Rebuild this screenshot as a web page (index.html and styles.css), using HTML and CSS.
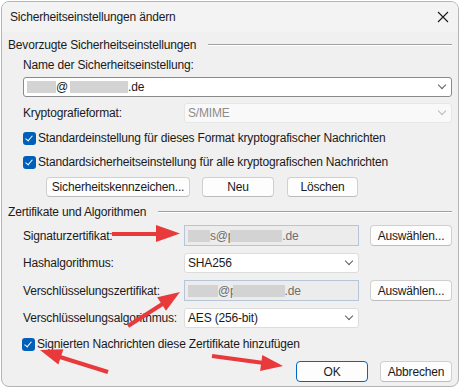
FILE: index.html
```html
<!DOCTYPE html>
<html lang="de">
<head>
    <meta charset="UTF-8">
    <title>Sicherheitseinstellungen ändern</title>
    <link rel="stylesheet" href="styles.css">
</head>
<body>
    <div class="window">
        <div class="titlebar">
            <span class="title">Sicherheitseinstellungen ändern</span>
            <svg class="close" width="12" height="12" viewBox="0 0 12 12"><path d="M1 1 L11 11 M11 1 L1 11" stroke="#1a1a1a" stroke-width="1.1" fill="none"/></svg>
        </div>
        <div class="content">
            <div class="group-head">
                <span>Bevorzugte Sicherheitseinstellungen</span>
                <div class="group-line"></div>
            </div>
            <div class="indent">
                <div class="label-line">Name der Sicherheitseinstellung:</div>
                <div class="select name-select">
                    <span class="value"><span class="blur" style="width: 29px"></span>@<span class="blur gap" style="width: 58px"></span>.de</span>
                    <span class="chevron"></span>
                </div>
                <div class="row krypto-row">
                    <span class="row-label krypto-label">Kryptografieformat:</span>
                    <div class="select disabled wide">
                        <span class="value">S/MIME</span>
                        <span class="chevron"></span>
                    </div>
                </div>
                <div class="check-row first">
                    <span class="checkbox"></span>
                    <span>Standardeinstellung für dieses Format kryptografischer Nachrichten</span>
                </div>
                <div class="check-row second">
                    <span class="checkbox"></span>
                    <span>Standardsicherheitseinstellung für alle kryptografischen Nachrichten</span>
                </div>
                <div class="button-row">
                    <button class="btn btn-kennz">Sicherheitskennzeichen...</button>
                    <button class="btn btn-neu">Neu</button>
                    <button class="btn btn-loeschen">Löschen</button>
                </div>
            </div>

            <div class="group-head second-group">
                <span>Zertifikate und Algorithmen</span>
                <div class="group-line"></div>
            </div>
            <div class="indent">
                <div class="row cert-row sig">
                    <span class="row-label">Signaturzertifikat:</span>
                    <div class="field"><span class="blur" style="width: 22px"></span>s@p<span class="blur over" style="width: 52px"></span>.de</div>
                    <button class="btn btn-choose">Auswählen...</button>
                </div>
                <div class="row algo-row">
                    <span class="row-label">Hashalgorithmus:</span>
                    <div class="select algo">
                        <span class="value">SHA256</span>
                        <span class="chevron"></span>
                    </div>
                </div>
                <div class="row cert-row">
                    <span class="row-label">Verschlüsselungszertifikat:</span>
                    <div class="field"><span class="blur" style="width: 30px"></span>@p<span class="blur over" style="width: 52px"></span>.de</div>
                    <button class="btn btn-choose">Auswählen...</button>
                </div>
                <div class="row algo-row">
                    <span class="row-label">Verschlüsselungsalgorithmus:</span>
                    <div class="select algo">
                        <span class="value">AES (256-bit)</span>
                        <span class="chevron"></span>
                    </div>
                </div>
            </div>
            <div class="check-row last">
                <span class="checkbox"></span>
                <span>Signierten Nachrichten diese Zertifikate hinzufügen</span>
            </div>
            <div class="footer">
                <button class="btn btn-ok">OK</button>
                <button class="btn btn-cancel">Abbrechen</button>
            </div>
        </div>

        <!-- annotation arrows -->
        <svg class="arrows" width="460" height="389" viewBox="0 0 460 389">
            <g fill="#e8393b" stroke="#e8393b">
                <line x1="112" y1="234" x2="160" y2="234" stroke-width="4"/>
                <polygon points="156,225 180,233.5 156,242" stroke="none"/>
                <line x1="128" y1="326" x2="164" y2="303" stroke-width="4"/>
                <polygon points="157.2,297.3 180,292 166,310.7" stroke="none"/>
                <line x1="108" y1="372" x2="60" y2="357" stroke-width="4"/>
                <polygon points="63.4,349.2 40,350 58.4,364.4" stroke="none"/>
                <line x1="212" y1="356" x2="264" y2="363" stroke-width="4"/>
                <polygon points="262.3,355.1 283,366 260.1,370.9" stroke="none"/>
            </g>
        </svg>
    </div>
</body>
</html>
```

FILE: styles.css
```css
body {
    margin: 0;
    background-color: #ffffff;
    font-family: 'Liberation Sans', Arial, sans-serif;
    font-size: 12px;
    letter-spacing: -0.17px;
    color: #1a1a1a;
}

.window {
    position: relative;
    margin: 1px;
    width: 458px;
    height: 386px;
    box-sizing: border-box;
    border: 1px solid #b4b4b4;
    border-radius: 8px;
    background-color: #f0f0f0;
    overflow: hidden;
}

.titlebar {
    height: 30px;
    display: flex;
    align-items: center;
    justify-content: space-between;
    padding: 0 8px 0 8px;
    background-color: #f3f3f3;
}

.close {
    margin-right: 1px;
}

.content {
    padding: 0 6px;
}

.group-head {
    display: flex;
    align-items: center;
    height: 16px;
    margin-top: 5px;
}

.group-head.second-group {
    margin-top: 7px;
}

.group-line {
    flex: 1;
    height: 1px;
    margin-left: 12px;
    background-color: #a0a0a0;
    border-bottom: 1px solid #ffffff;
}

.indent {
    padding-left: 15px;
}

.label-line {
    height: 16px;
    line-height: 16px;
    margin-top: 4px;
}

.select {
    display: flex;
    align-items: center;
    justify-content: space-between;
    height: 20px;
    box-sizing: border-box;
    border: 1px solid #8a8a8a;
    border-radius: 3px;
    background-color: #ffffff;
    padding: 0 6px 0 3px;
}

.name-select {
    margin-top: 4px;
}

.select.disabled {
    border-color: #e6e6e6;
    background-color: #f9f9f9;
    color: #8c8c8c;
}

.select.algo {
    width: 175px;
    border-color: #dcdcdc;
}

.select.wide {
    flex: 1;
}

.chevron {
    width: 5px;
    height: 5px;
    border-right: 1px solid #5c5c5c;
    border-bottom: 1px solid #5c5c5c;
    transform: translateY(-2px) rotate(45deg);
}

.disabled .chevron {
    border-color: #b8b8b8;
}

.value {
    display: flex;
    align-items: center;
}

.blur {
    display: inline-block;
    height: 12px;
    background-color: #d3d3d3;
}

.blur.gap {
    margin-left: 2px;
}

.blur.over {
    margin-left: -4px;
}

.row {
    display: flex;
    align-items: center;
}

.row-label {
    width: 161px;
}

.krypto-row {
    margin-top: 6px;
}

.check-row {
    display: flex;
    align-items: center;
    height: 16px;
}

.check-row.first {
    margin-top: 7px;
}

.check-row.second {
    margin-top: 8px;
}

.check-row.last {
    margin-top: 8px;
    padding-left: 14px;
}

.checkbox {
    position: relative;
    width: 13px;
    height: 13px;
    margin-right: 2px;
    border-radius: 3px;
    background-color: #005fb8;
}

.checkbox::after {
    content: '';
    position: absolute;
    left: 4px;
    top: 2px;
    width: 3px;
    height: 6px;
    border-right: 1px solid #ffffff;
    border-bottom: 1px solid #ffffff;
    transform: rotate(40deg);
}

.btn {
    height: 20px;
    box-sizing: border-box;
    padding: 0;
    border: 1px solid #d0d0d0;
    border-bottom-color: #bcbcbc;
    border-radius: 4px;
    background-color: #fdfdfd;
    font-family: inherit;
    font-size: 12px;
    letter-spacing: inherit;
    color: #1a1a1a;
}

.button-row {
    display: flex;
    margin-top: 7px;
    padding-left: 23px;
}

.btn-kennz {
    width: 144px;
}

.btn-neu {
    width: 72px;
    margin-left: 12px;
}

.btn-loeschen {
    width: 71px;
    margin-left: 13px;
}

.cert-row {
    margin-top: 7px;
}

.cert-row.sig {
    margin-top: 5px;
}

.field {
    display: flex;
    align-items: center;
    width: 175px;
    height: 21px;
    box-sizing: border-box;
    padding-left: 3px;
    border: 1px solid #b6c6d8;
    background-color: #ececec;
    color: #6e6e6e;
}

.btn-choose {
    width: 82px;
    height: 21px;
    margin-left: 11px;
}

.algo-row {
    margin-top: 7px;
}

.footer {
    display: flex;
    justify-content: flex-end;
    margin-top: 9px;
}

.btn-ok,
.btn-cancel {
    width: 72px;
    height: 21px;
}

.btn-ok {
    border-color: #0067c0;
}

.btn-cancel {
    margin-left: 12px;
}

.arrows {
    position: absolute;
    left: -2px;
    top: -2px;
    pointer-events: none;
}
```
